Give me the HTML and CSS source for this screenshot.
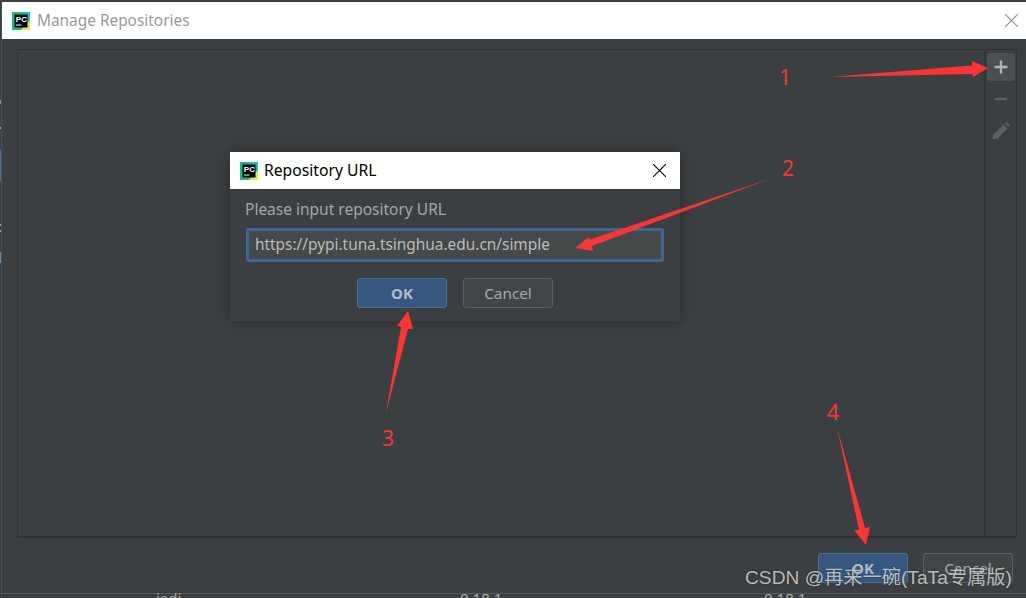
FILE: index.html
```html
<!DOCTYPE html>
<html lang="en">
<head>
<meta charset="utf-8">
<title>Manage Repositories</title>
<link rel="stylesheet" href="styles.css">
</head>
<body>
<div class="screen">
  <div class="strip"></div>
  <div class="stage">
    <main class="window">
      <header class="titlebar">
        <svg class="logo" viewBox="0 0 18 18" aria-hidden="true">
          <rect width="18" height="18" fill="#1cb98c"/>
          <polygon points="7,0 18,0 18,9" fill="#14b9d5"/>
          <polygon points="18,8 18,18 9,18" fill="#e4e84a"/>
          <rect x="2.500" y="2.500" width="13" height="13" fill="#000"/>
          <text x="3.800" y="10" class="logo-text">PC</text>
          <rect x="4" y="12.500" width="5.500" height="1" fill="#fff"/>
        </svg>
        <h1 class="title title-muted">Manage Repositories</h1>
        <svg class="close close-muted" viewBox="0 0 12 12" aria-hidden="true"><path d="M0 0L12 12M12 0L0 12"/></svg>
      </header>
      <div class="content">
        <section class="panel">
          <div class="list"></div>
          <div class="toolbar">
            <div class="tool tool-active">
              <svg viewBox="0 0 18 18" class="icon" aria-hidden="true"><path d="M7.800 2.500h2.400v5.300h5.300v2.400h-5.300v5.300H7.800v-5.300H2.500V7.800h5.300z" fill="#afb1b3"/></svg>
            </div>
            <div class="tool">
              <svg viewBox="0 0 18 18" class="icon" aria-hidden="true"><rect x="3" y="7.800" width="12" height="2.400" fill="#5d6062"/></svg>
            </div>
            <div class="tool">
              <svg viewBox="0 0 18 18" class="icon" aria-hidden="true"><path d="M1 17v-4L11.500 2.500l4 4L5 17zM12.800 1.200l1.200-1a1 1 0 0 1 1.300 0l2.400 2.400a1 1 0 0 1 0 1.300l-1 1.200z" fill="#5d6062"/></svg>
            </div>
          </div>
        </section>
      </div>
      <footer class="footer">
        <button class="btn btn-primary">OK</button>
        <button class="btn">Cancel</button>
      </footer>
    </main>
    <div class="behind">
      <span class="cell cell-name">jedi</span>
      <span class="cell cell-ver">0.18.1</span>
      <span class="cell cell-latest">0.18.1</span>
    </div>
  </div>
</div>

<section class="dialog">
  <header class="titlebar dialog-bar">
    <svg class="logo" viewBox="0 0 18 18" aria-hidden="true">
      <rect width="18" height="18" fill="#1cb98c"/>
      <polygon points="7,0 18,0 18,9" fill="#14b9d5"/>
      <polygon points="18,8 18,18 9,18" fill="#e4e84a"/>
      <rect x="2.500" y="2.500" width="13" height="13" fill="#000"/>
      <text x="3.800" y="10" class="logo-text">PC</text>
      <rect x="4" y="12.500" width="5.500" height="1" fill="#fff"/>
    </svg>
    <h2 class="title title-strong">Repository URL</h2>
    <svg class="close" viewBox="0 0 12 12" aria-hidden="true"><path d="M0 0L12 12M12 0L0 12"/></svg>
  </header>
  <div class="dialog-body">
    <label class="prompt" for="url">Please input repository URL</label>
    <input class="url" id="url" type="text" value="https://pypi.tuna.tsinghua.edu.cn/simple">
    <div class="dialog-actions">
      <button class="btn btn-primary">OK</button>
      <button class="btn">Cancel</button>
    </div>
  </div>
</section>

<svg class="arrows" viewBox="0 0 1026 598" aria-hidden="true">
  <path d="M830 77L972 65.500L972 61L988 68L973 77L972.500 74z"/>
  <path d="M772 178L590 239.500L589 237L575 248L593 251L592 246z"/>
  <path d="M386 413L401 327L397 326L408 311L413 329L408 329z"/>
  <path d="M837 427L865 528L870 527L866 545L854 530L859 530z"/>
</svg>
<span class="mark mark-1">1</span>
<span class="mark mark-2">2</span>
<span class="mark mark-3">3</span>
<span class="mark mark-4">4</span>
<div class="watermark">CSDN @再来一碗(TaTa专属版)</div>
</body>
</html>
```

FILE: styles.css
```css
* { box-sizing: border-box; }
html, body {
  margin: 0;
  width: 1026px;
  height: 598px;
  overflow: hidden;
}
body {
  position: relative;
  background: #3c3f41;
  font-family: "Noto Sans", "Open Sans", sans-serif;
}
.screen { display: flex; height: 598px; }
.strip {
  width: 2px;
  flex: none;
  border-right: 1px solid #4a4e55;
  background: linear-gradient(to bottom,
    #3c3f41 0, #3c3f41 100px, #8a8f92 100px, #8a8f92 104px,
    #3c3f41 104px, #3c3f41 127px, #a0a0a0 127px, #a0a0a0 129px,
    #3c3f41 129px, #3c3f41 150px, #3f6fa8 150px, #3f6fa8 181px,
    #3c3f41 181px, #3c3f41 224px, #a0a0a0 224px, #a0a0a0 226px,
    #3c3f41 226px, #3c3f41 230px, #a0a0a0 230px, #a0a0a0 232px,
    #3c3f41 232px, #3c3f41 252px, #5b8dc0 252px, #5b8dc0 263px,
    #3c3f41 263px);
}
.stage { flex: 1; min-width: 0; padding-top: 2px; overflow: hidden; }

.window {
  height: 592px;
  display: flex;
  flex-direction: column;
  background: #3c3f41;
  border-bottom: 1px solid #55585a;
}
.titlebar {
  height: 37px;
  flex: none;
  display: flex;
  align-items: center;
  background: #fff;
  padding: 0 8px 0 10px;
}
.logo { width: 18px; height: 18px; flex: none; }
.logo-text {
  font-family: "Liberation Sans", sans-serif;
  font-weight: 700;
  font-size: 8px;
  fill: #fff;
}
.title {
  margin: 0 0 2px 7px;
  font-size: 15.4px;
  font-weight: 400;
  color: #000;
  flex: 1;
}
.title-muted { color: #999; margin-bottom: 0; }
.title-strong { font-size: 15.7px; }
.close {
  width: 13px;
  height: 13px;
  flex: none;
  fill: none;
  stroke: #000;
  stroke-width: 1;
}
.close-muted { stroke: #8a8a8a; }

.content { flex: 1; min-height: 0; padding: 10px 9px 0 15px; display: flex; }
.panel {
  flex: 1;
  display: flex;
  border: 1px solid #2f3133;
  border-bottom-width: 2px;
}
.list { flex: 1; }
.toolbar {
  width: 32px;
  flex: none;
  border-left: 2px solid #323435;
  padding: 3px 1px;
  display: flex;
  flex-direction: column;
  gap: 4px;
}
.tool {
  height: 28px;
  display: flex;
  align-items: center;
  justify-content: center;
  border-radius: 4px;
}
.tool-active { background: #4b4f51; }
.icon { width: 18px; height: 18px; }

.footer {
  height: 55px;
  flex: none;
  display: flex;
  justify-content: flex-end;
  gap: 15px;
  padding: 15px 13px 0 0;
}
.btn {
  width: 90px;
  height: 30px;
  background: #424547;
  border: 1px solid #5e6060;
  border-radius: 3px;
  color: #a8a8a8;
  font: 400 15.3px "Noto Sans", "Open Sans", sans-serif;
  padding: 0;
}
.btn-primary {
  background: #365880;
  border-color: #4c708c;
  color: #b4bcc6;
  font-weight: 700;
  font-size: 15px;
}

.behind {
  height: 4px;
  display: flex;
  font-size: 15px;
  color: #a9a9a9;
  line-height: 14px;
}
.cell { display: block; margin-top: -3px; height: 14px; }
.cell-name { margin-left: 154px; width: 304px; }
.cell-ver { width: 304px; }

.dialog {
  position: absolute;
  left: 230px;
  top: 152px;
  width: 450px;
  height: 169px;
  background: #3c3f41;
  box-shadow: 0 0 12px rgba(0, 0, 0, .35);
}
.dialog-bar { padding: 0 14px 0 10px; }
.dialog-bar .title { margin-left: 6px; }
.dialog-body {
  padding: 9px 16px 0 15px;
  display: flex;
  flex-direction: column;
}
.prompt { font-size: 15.5px; line-height: 22px; color: #a3a5a6; }
.url {
  margin: 8px 0 0 1px;
  height: 34px;
  width: 418px;
  background: #45494a;
  border: 3px solid #3f6590;
  border-radius: 2px;
  padding: 0 6px 2px;
  color: #bbb;
  font: 400 15.4px "Noto Sans", "Open Sans", sans-serif;
  outline: none;
}
.dialog-actions {
  display: flex;
  justify-content: center;
  gap: 16px;
  margin-top: 16px;
  padding-left: 1px;
}

.arrows {
  position: absolute;
  left: 0;
  top: 0;
  width: 1026px;
  height: 598px;
  fill: #fb3535;
  pointer-events: none;
}
.mark {
  position: absolute;
  font: 400 21px/24px "Noto Sans", sans-serif;
  color: #f63636;
}
.mark-1 { left: 779px; top: 65px; }
.mark-2 { left: 782px; top: 156px; }
.mark-3 { left: 382px; top: 426px; }
.mark-4 { left: 827px; top: 400px; }
.watermark {
  position: absolute;
  left: 745px;
  top: 566px;
  font: 400 19.2px/24px "Liberation Sans", "Noto Sans CJK SC", sans-serif;
  color: rgba(225, 225, 225, .8);
  text-shadow: 0 0 2px rgba(0, 0, 0, .5);
  white-space: nowrap;
}
```
